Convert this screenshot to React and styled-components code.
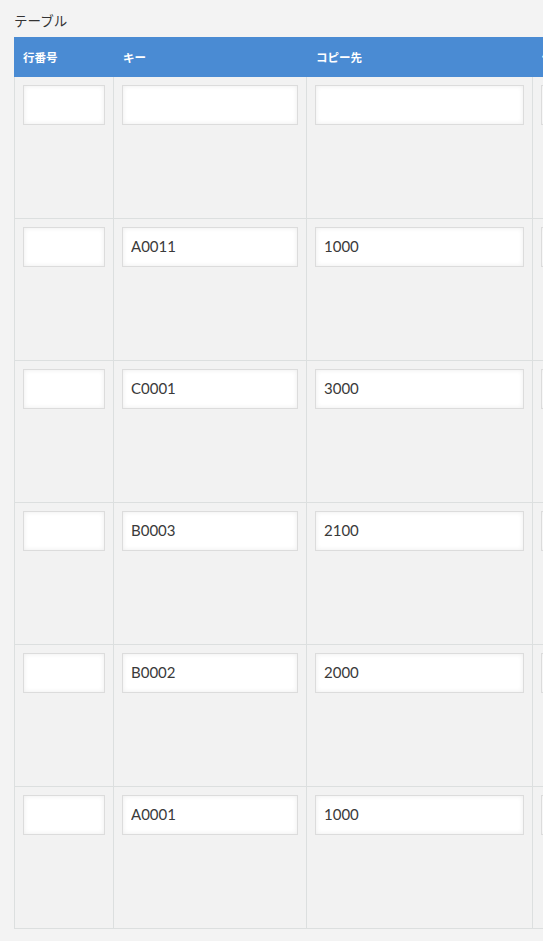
import React from 'react';
import styled, { createGlobalStyle } from 'styled-components';

const GlobalStyle = createGlobalStyle`
  html, body {
    margin: 0;
    padding: 0;
    background: #f3f3f3;
    overflow: hidden;
  }
  body {
    font-family: Lato, "Noto Sans CJK JP", sans-serif;
    color: #333;
  }
`;

const columns = [
  { key: 'line', label: '行番号', width: 100 },
  { key: 'key', label: 'キー', width: 193 },
  { key: 'dest', label: 'コピー先', width: 226 },
  { key: 'note', label: '備考', width: 226 },
];

const rows = [
  { line: '', key: '', dest: '', note: '' },
  { line: '', key: 'A0011', dest: '1000', note: '' },
  { line: '', key: 'C0001', dest: '3000', note: '' },
  { line: '', key: 'B0003', dest: '2100', note: '' },
  { line: '', key: 'B0002', dest: '2000', note: '' },
  { line: '', key: 'A0001', dest: '1000', note: '' },
];

function App() {
  return (
    <Page>
      <GlobalStyle />
      <Title>テーブル</Title>
      <Table>
        <HeaderRow>
          {columns.map((c) => (
            <HeaderCell key={c.key} $width={c.width}>
              {c.label}
            </HeaderCell>
          ))}
        </HeaderRow>
        {rows.map((r, i) => (
          <Row key={i}>
            {columns.map((c, j) => (
              <Cell key={c.key} $width={c.width} $first={j === 0}>
                <Input defaultValue={r[c.key]} />
              </Cell>
            ))}
          </Row>
        ))}
      </Table>
    </Page>
  );
}

export default App;

const Page = styled.div`
  padding: 8px 0 0 14px;
  width: 900px;
`;

const Title = styled.div`
  font-family: "Noto Sans CJK JP", sans-serif;
  font-size: 13.5px;
  line-height: 24px;
  color: #333;
  margin-bottom: 5px;
`;

const Table = styled.div`
  display: flex;
  flex-direction: column;
`;

const HeaderRow = styled.div`
  display: flex;
  height: 40px;
  background: #4a8bd3;
`;

const HeaderCell = styled.div`
  flex: 0 0 ${(p) => p.$width}px;
  box-sizing: border-box;
  padding: 0 9px;
  display: flex;
  align-items: center;
  color: #fff;
  font-family: "Noto Sans CJK JP", sans-serif;
  font-weight: 700;
  font-size: 11.5px;
`;

const Row = styled.div`
  display: flex;
  height: 142px;
`;

const Cell = styled.div`
  flex: 0 0 ${(p) => p.$width}px;
  box-sizing: border-box;
  padding: 8px;
  background: #f2f2f2;
  border-right: 1px solid #dcdfdf;
  border-bottom: 1px solid #dcdfdf;
  border-left: ${(p) => (p.$first ? '1px solid #dcdfdf' : 'none')};
`;

const Input = styled.input`
  display: block;
  width: 100%;
  height: 40px;
  box-sizing: border-box;
  margin: 0;
  padding: 0 8px 2px;
  border: 1px solid #dcdcdc;
  border-radius: 0;
  background: #fff;
  box-shadow: inset 0 0 5px rgba(0, 0, 0, 0.08);
  font-family: Lato, "Noto Sans CJK JP", sans-serif;
  font-size: 15px;
  color: #3a3a3a;
  outline: none;
`;
